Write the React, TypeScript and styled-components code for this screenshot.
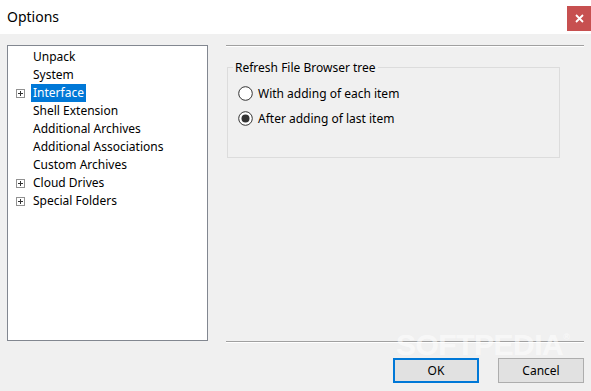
import React from 'react'
import styled, { createGlobalStyle } from 'styled-components'

const GlobalStyle = createGlobalStyle`
  html, body {
    margin: 0;
    padding: 0;
    background: #f0f0f0;
  }
  * {
    box-sizing: border-box;
  }
`

const treeItems = [
  { label: 'Unpack' },
  { label: 'System' },
  { label: 'Interface', expandable: true, selected: true },
  { label: 'Shell Extension' },
  { label: 'Additional Archives' },
  { label: 'Additional Associations' },
  { label: 'Custom Archives' },
  { label: 'Cloud Drives', expandable: true },
  { label: 'Special Folders', expandable: true },
]

const PlusBox = () => (
  <svg width='9' height='9' viewBox='0 0 9 9'>
    <rect x='0.5' y='0.5' width='8' height='8' fill='#fff' stroke='#919191' />
    <path d='M2 4.5h5M4.5 2v5' stroke='#333' strokeWidth='1' />
  </svg>
)

const Radio = ({ checked }: { checked?: boolean }) => (
  <svg width='15' height='15' viewBox='0 0 15 15'>
    <circle cx='7.5' cy='7.5' r='6.8' fill='#fff' stroke='#333' strokeWidth='1' />
    {checked && <circle cx='7.5' cy='7.5' r='4' fill='#333' />}
  </svg>
)

const App = () => {
  return (
    <Window>
      <GlobalStyle />
      <TitleBar>
        <Title>Options</Title>
        <CloseButton>
          <svg width='9' height='9' viewBox='0 0 9 9'>
            <path d='M1 1l7 7M8 1l-7 7' stroke='#fff' strokeWidth='1.8' />
          </svg>
        </CloseButton>
      </TitleBar>

      <Content>
        <Tree>
          {treeItems.map((item) => (
            <TreeRow key={item.label}>
              <Expander>{item.expandable && <PlusBox />}</Expander>
              <TreeLabel $selected={item.selected}>{item.label}</TreeLabel>
            </TreeRow>
          ))}
        </Tree>

        <Panel>
          <Rule />
          <Group>
            <Legend>Refresh File Browser tree</Legend>
            <RadioRow>
              <Radio />
              <span>With adding of each item</span>
            </RadioRow>
            <RadioRow>
              <Radio checked />
              <span>After adding of last item</span>
            </RadioRow>
          </Group>
          <Spacer />
          <Rule />
        </Panel>
      </Content>

      <Footer>
        <Button $default>OK</Button>
        <Button>Cancel</Button>
      </Footer>

      <Watermark>SOFTPEDIA<sup>®</sup></Watermark>
    </Window>
  )
}

const Window = styled('div')`
  position: relative;
  width: 591px;
  height: 391px;
  overflow: hidden;
  background: #f0f0f0;
  font-family: 'Noto Sans', 'Open Sans', sans-serif;
  font-size: 12px;
  color: #000;
`

const TitleBar = styled('div')`
  height: 34px;
  background: #fff;
  display: flex;
  justify-content: space-between;
  align-items: flex-start;
  padding-left: 7px;
`

const Title = styled('div')`
  font-size: 14px;
  line-height: 34px;
  color: #000;
`

const CloseButton = styled('div')`
  margin-top: 6px;
  width: 24px;
  height: 25px;
  background: #c75050;
  display: grid;
  place-items: center;
`

const Content = styled('div')`
  display: flex;
  align-items: flex-start;
  padding: 11px 7px 0 7px;
  gap: 18px;
`

const Tree = styled('div')`
  width: 201px;
  height: 296px;
  background: #fff;
  border: 1px solid #828790;
  padding-top: 2px;
`

const TreeRow = styled('div')`
  height: 18px;
  display: flex;
  align-items: center;
`

const Expander = styled('div')`
  width: 23px;
  padding-left: 8px;
  display: flex;
  align-items: center;
`

const TreeLabel = styled('span')<{ $selected?: boolean }>`
  height: 18px;
  line-height: 18px;
  padding: 0 2px;
  background: ${(p) => (p.$selected ? '#0078d7' : 'transparent')};
  color: ${(p) => (p.$selected ? '#fff' : '#000')};
  white-space: nowrap;
`

const Panel = styled('div')`
  width: 358px;
  height: 298px;
  display: flex;
  flex-direction: column;
`

const Rule = styled('div')`
  height: 2px;
  border-top: 1px solid #a0a0a0;
  border-bottom: 1px solid #fff;
`

const Spacer = styled('div')`
  flex: 1;
`

const Group = styled('div')`
  position: relative;
  margin: 20px 0 0 1px;
  width: 333px;
  height: 91px;
  border: 1px solid #dcdcdc;
  padding: 13px 0 0 10px;
`

const Legend = styled('span')`
  position: absolute;
  top: -8px;
  left: 5px;
  padding: 0 2px;
  background: #f0f0f0;
  line-height: 16px;
`

const RadioRow = styled('div')`
  height: 25px;
  display: flex;
  align-items: center;
  gap: 5px;
  white-space: nowrap;
`

const Footer = styled('div')`
  display: flex;
  justify-content: flex-end;
  gap: 19px;
  padding-right: 7px;
  margin-top: 15px;
`

const Button = styled('div')<{ $default?: boolean }>`
  width: 86px;
  height: 25px;
  display: grid;
  place-items: center;
  background: #e1e1e1;
  border: ${(p) => (p.$default ? '2px solid #0078d7' : '1px solid #adadad')};
  color: #000;
`

const Watermark = styled('div')`
  position: absolute;
  left: 396px;
  top: 333px;
  font-family: 'Liberation Sans', Arial, sans-serif;
  font-weight: 700;
  font-size: 30px;
  line-height: 24px;
  letter-spacing: -0.5px;
  color: rgba(255, 255, 255, 0.55);
  pointer-events: none;

  & sup {
    font-size: 9px;
    line-height: 9px;
    vertical-align: top;
  }
`

export default App
